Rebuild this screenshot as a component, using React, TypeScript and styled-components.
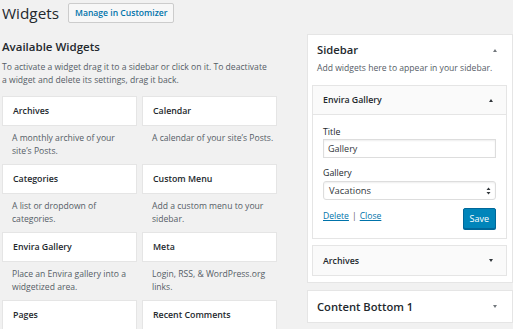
import React from 'react';
import styled, { createGlobalStyle } from 'styled-components';

interface Widget {
  name: string;
  description: string;
}

// descriptions keep the line breaks seen in the screenshot
const widgets: Widget[] = [
  { name: 'Archives', description: 'A monthly archive of your\nsite’s Posts.' },
  { name: 'Calendar', description: 'A calendar of your site’s Posts.' },
  { name: 'Categories', description: 'A list or dropdown of\ncategories.' },
  { name: 'Custom Menu', description: 'Add a custom menu to your\nsidebar.' },
  { name: 'Envira Gallery', description: 'Place an Envira gallery into a\nwidgetized area.' },
  { name: 'Meta', description: 'Login, RSS, & WordPress.org\nlinks.' },
  { name: 'Pages', description: 'Your site’s WordPress Pages.' },
  { name: 'Recent Comments', description: 'Your site’s most recent comments.' },
];

const App: React.FC = () => {
  return (
    <Page>
      <GlobalStyle />
      <Header>
        <Title>Widgets</Title>
        <HeaderButton>Manage in Customizer</HeaderButton>
      </Header>

      <Columns>
        <Available>
          <SectionTitle>Available Widgets</SectionTitle>
          <Intro>
            {'To activate a widget drag it to a sidebar or click on it. To deactivate\na widget and delete its settings, drag it back.'}
          </Intro>
          <WidgetGrid>
            {widgets.map((widget) => (
              <WidgetItem key={widget.name}>
                <WidgetCard>{widget.name}</WidgetCard>
                <WidgetDescription>{widget.description}</WidgetDescription>
              </WidgetItem>
            ))}
          </WidgetGrid>
        </Available>

        <Sidebars>
          <SidebarPanel>
            <PanelHeader>
              <PanelTitle>Sidebar</PanelTitle>
              <Arrow $up $light />
            </PanelHeader>
            <PanelDescription>Add widgets here to appear in your sidebar.</PanelDescription>

            <WidgetBox>
              <WidgetTop>
                <span>Envira Gallery</span>
                <Arrow $up />
              </WidgetTop>
              <WidgetInside>
                <FieldLabel>Title</FieldLabel>
                <TextInput value="Gallery" readOnly />
                <FieldLabel $spaced>Gallery</FieldLabel>
                <SelectBox>
                  <span>Vacations</span>
                  <SelectArrows viewBox="0 0 6 10">
                    <path d="M3 0.5 L5.5 3.8 H0.5 Z M3 9.5 L5.5 6.2 H0.5 Z" />
                  </SelectArrows>
                </SelectBox>
                <Actions>
                  <Links>
                    <LinkText>Delete</LinkText>
                    <Separator>|</Separator>
                    <LinkText>Close</LinkText>
                  </Links>
                  <SaveButton>Save</SaveButton>
                </Actions>
              </WidgetInside>
            </WidgetBox>

            <WidgetBox $collapsed>
              <WidgetTop $collapsed>
                <span>Archives</span>
                <Arrow />
              </WidgetTop>
            </WidgetBox>
          </SidebarPanel>

          <ClosedPanel>
            <PanelTitle>Content Bottom 1</PanelTitle>
            <Arrow $light />
          </ClosedPanel>
        </Sidebars>
      </Columns>
    </Page>
  );
};

export default App;

const GlobalStyle = createGlobalStyle`
  html, body {
    margin: 0;
    padding: 0;
    background: #f1f1f1;
    overflow: hidden;
  }
  body {
    font-family: "Open Sans", "Noto Sans", sans-serif;
    color: #23282d;
  }
`;

const Page = styled.div`
  width: 513px;
  height: 329px;
  padding-left: 2px;
  box-sizing: border-box;
  overflow: hidden;
`;

const Header = styled.div`
  display: flex;
  align-items: center;
  gap: 9px;
  height: 26px;
`;

const Title = styled.h1`
  margin: 0;
  font-size: 15.3px;
  font-weight: 400;
  line-height: 26px;
  color: #23282d;
`;

const HeaderButton = styled.div`
  height: 20px;
  padding: 0 6px;
  box-sizing: border-box;
  border: 1px solid #ccc;
  border-radius: 2px;
  background: #f7f7f7;
  color: #0073aa;
  font-size: 8.6px;
  font-weight: 600;
  line-height: 18px;
  margin-top: -1px;
`;

const Columns = styled.div`
  display: flex;
  gap: 30px;
  margin-top: 8px;
`;

const Available = styled.div`
  width: 275px;
  flex: none;
`;

const SectionTitle = styled.h2`
  margin: 0;
  padding-top: 5px;
  font-size: 11.5px;
  font-weight: 600;
  line-height: 16px;
`;

const Intro = styled.p`
  margin: 6px 0 0;
  font-size: 8.6px;
  line-height: 13px;
  color: #555d66;
  white-space: pre-line;
`;

const WidgetGrid = styled.div`
  display: grid;
  grid-template-columns: 135px 135px;
  column-gap: 5px;
  grid-auto-rows: 68px;
  margin-top: 9px;
`;

const WidgetItem = styled.div`
  display: flex;
  flex-direction: column;
`;

const WidgetCard = styled.div`
  height: 30px;
  box-sizing: border-box;
  padding: 0 10px;
  background: #fff;
  border: 1px solid #e5e5e5;
  font-size: 8.8px;
  font-weight: 600;
  line-height: 28px;
  color: #23282d;
`;

const WidgetDescription = styled.div`
  padding: 6px 0 0 10px;
  font-size: 8.6px;
  line-height: 12.5px;
  color: #555d66;
  white-space: pre-line;
`;

const Sidebars = styled.div`
  width: 206px;
  flex: none;
  display: flex;
  flex-direction: column;
  gap: 7px;
`;

const SidebarPanel = styled.div`
  background: #fff;
  border: 1px solid #e5e5e5;
  padding: 0 5px 6px 4px;
`;

const PanelHeader = styled.div`
  display: flex;
  align-items: center;
  justify-content: space-between;
  padding: 7px 10px 0 5px;
  height: 16px;
`;

const PanelTitle = styled.span`
  font-size: 11.2px;
  font-weight: 600;
  line-height: 16px;
  color: #23282d;
`;

const Arrow = styled.span<{ $up?: boolean; $light?: boolean }>`
  width: 0;
  height: 0;
  border-left: 2.5px solid transparent;
  border-right: 2.5px solid transparent;
  ${({ $up, $light }) =>
    $up
      ? `border-bottom: 3.5px solid ${$light ? '#72777c' : '#32373c'};`
      : `border-top: 3.5px solid ${$light ? '#72777c' : '#32373c'};`}
`;

const PanelDescription = styled.div`
  padding: 4px 0 0 5px;
  font-size: 8.6px;
  line-height: 13px;
  color: #555d66;
`;

const WidgetBox = styled.div<{ $collapsed?: boolean }>`
  border: 1px solid #e5e5e5;
  background: #fff;
  margin-top: ${({ $collapsed }) => ($collapsed ? '6px' : '10px')};
`;

const WidgetTop = styled.div<{ $collapsed?: boolean }>`
  display: flex;
  align-items: center;
  justify-content: space-between;
  height: ${({ $collapsed }) => ($collapsed ? '29px' : '28px')};
  padding: 0 13px 0 10px;
  background: #fafafa;
  font-size: 8.8px;
  font-weight: 600;
  color: #23282d;
  border-bottom: ${({ $collapsed }) => ($collapsed ? 'none' : '1px solid #e5e5e5')};
`;

const WidgetInside = styled.div`
  padding: 10px 10px 9px;
`;

const FieldLabel = styled.div<{ $spaced?: boolean }>`
  font-size: 8.8px;
  line-height: 14px;
  color: #23282d;
  margin-top: ${({ $spaced }) => ($spaced ? '8px' : '0')};
`;

const TextInput = styled.input`
  display: block;
  width: 100%;
  height: 19px;
  box-sizing: border-box;
  margin: 0;
  padding: 0 4px;
  border: 1px solid #ddd;
  box-shadow: inset 0 1px 2px rgba(0, 0, 0, 0.07);
  font-family: "Open Sans", "Noto Sans", sans-serif;
  font-size: 9px;
  color: #32373c;
  outline: none;
`;

const SelectBox = styled.div`
  display: flex;
  align-items: center;
  justify-content: space-between;
  height: 19px;
  box-sizing: border-box;
  margin-top: 1px;
  padding: 0 4px 0 5px;
  border: 1px solid #ddd;
  border-radius: 3px;
  box-shadow: inset 0 1px 2px rgba(0, 0, 0, 0.07);
  font-size: 9.4px;
  color: #32373c;
`;

const SelectArrows = styled.svg`
  width: 5px;
  height: 8px;
  fill: #32373c;
`;

const Actions = styled.div`
  display: flex;
  align-items: center;
  justify-content: space-between;
  margin-top: 8px;
  height: 21px;
`;

const Links = styled.div`
  display: flex;
  align-items: center;
  gap: 3px;
  font-size: 8.6px;
  margin-top: -5px;
`;

const LinkText = styled.span`
  color: #0073aa;
  text-decoration: underline;
`;

const Separator = styled.span`
  color: #555d66;
`;

const SaveButton = styled.div`
  height: 21px;
  box-sizing: border-box;
  padding: 0 6px;
  border: 1px solid #006799;
  border-radius: 2px;
  background: #0085ba;
  color: #fff;
  font-size: 9px;
  line-height: 19px;
  box-shadow: 0 1px 0 #006799;
`;

const ClosedPanel = styled.div`
  display: flex;
  align-items: center;
  justify-content: space-between;
  height: 33px;
  box-sizing: border-box;
  padding: 0 15px 0 9px;
  background: #fff;
  border: 1px solid #e5e5e5;
`;
